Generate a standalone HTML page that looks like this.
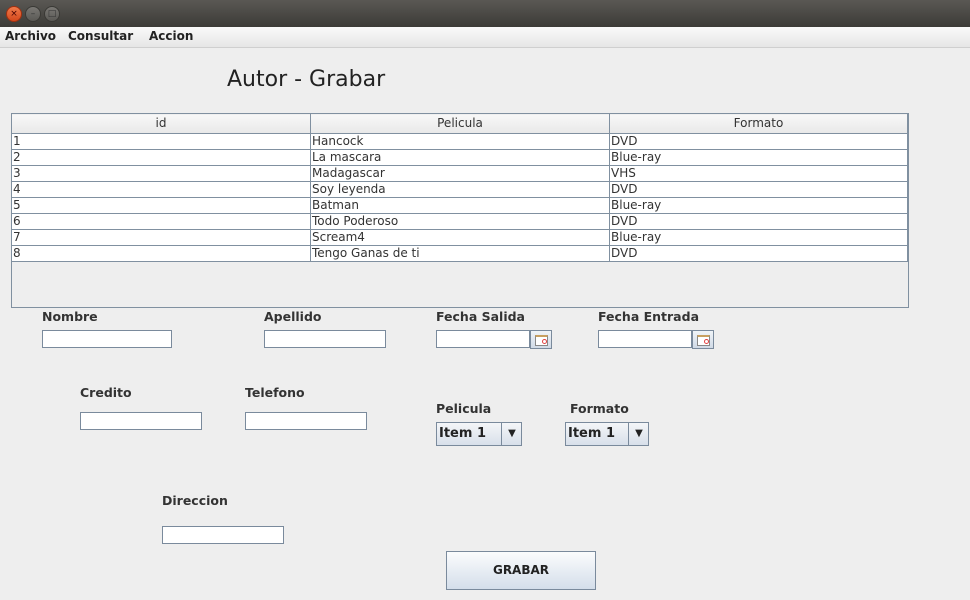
<!DOCTYPE html>
<html><head><style>
body{margin:0;width:970px;height:600px;background:#eeeeee;font-family:"DejaVu Sans","Liberation Sans",sans-serif;position:relative;overflow:hidden}
.a{position:absolute}
.tb{left:0;top:0;width:970px;height:27px;background:linear-gradient(#5a5854,#3c3b37)}
.btn{position:absolute;top:6px;width:14px;height:14px;border-radius:50%;background:linear-gradient(#7a7874,#5a5955);border:1px solid #3a3935;font-size:9px;line-height:14px;text-align:center;color:#333}
.mb{left:0;top:27px;width:970px;height:20px;background:linear-gradient(#fafafa,#e6e6e6);border-bottom:1px solid #cfcfcf;font-size:12px;font-weight:bold;color:#222}
.lbl{font-size:12.5px;font-weight:bold;color:#333}
.tf{background:#fff;border:1px solid #7a8a9c;height:16px;box-sizing:content-box}
table{border-collapse:collapse;font-size:12px;color:#333;table-layout:fixed}
td{border:1px solid #8090a0;height:15px;padding:0 1px;line-height:15px;overflow:hidden;white-space:nowrap}
th{border:1px solid #8090a0;font-weight:normal;height:18px;padding:0;line-height:19px;background:linear-gradient(#f8f8f8,#e8e8e8)}
.cb{height:22px;border:1px solid #7a8a9c;background:linear-gradient(#f4f6f8,#d8e0ea);font-size:13px;font-weight:bold;color:#222;line-height:22px}
.cal{width:20px;height:17px;border:1px solid #7a8a9c;background:linear-gradient(#f0f4f8,#d0dae6)}
.cal i{position:absolute;left:4px;top:4px;width:11px;height:8px;border:1px solid #888;border-top:2px solid #c8a060;background:#fff}
.cal b{position:absolute;left:11px;top:8px;width:3px;height:3px;border:1px solid #e04040;border-radius:50%}
</style></head><body>
<div class="a tb">
<div class="btn" style="left:6px;background:linear-gradient(#f07a4a,#d4481c);border-color:#a03010;color:#400">×</div>
<div class="btn" style="left:25px">–</div><div class="btn" style="left:44px">□</div>
</div>
<div class="a mb"><span class="a" style="left:5px;top:2px">Archivo</span><span class="a" style="left:68px;top:2px">Consultar</span><span class="a" style="left:149px;top:2px">Accion</span></div>
<div class="a" style="left:227px;top:67px;font-size:22px;color:#222">Autor - Grabar</div>
<div class="a" style="left:11px;top:113px;width:896px;height:193px;border:1px solid #8090a0;background:#eeeeee">
<table style="width:897px;margin:-1px 0 0 -1px">
<colgroup><col style="width:299px"><col style="width:299px"><col></colgroup>
<tr><th>id</th><th>Pelicula</th><th>Formato</th></tr>
<tr style="background:#fff"><td>1</td><td>Hancock</td><td>DVD</td></tr>
<tr style="background:#fff"><td>2</td><td>La mascara</td><td>Blue-ray</td></tr>
<tr style="background:#fff"><td>3</td><td>Madagascar</td><td>VHS</td></tr>
<tr style="background:#fff"><td>4</td><td>Soy leyenda</td><td>DVD</td></tr>
<tr style="background:#fff"><td>5</td><td>Batman</td><td>Blue-ray</td></tr>
<tr style="background:#fff"><td>6</td><td>Todo Poderoso</td><td>DVD</td></tr>
<tr style="background:#fff"><td>7</td><td>Scream4</td><td>Blue-ray</td></tr>
<tr style="background:#fff"><td>8</td><td>Tengo Ganas de ti</td><td>DVD</td></tr>
</table></div>
<div class="a lbl" style="left:42px;top:309px">Nombre</div><div class="a tf" style="left:42px;top:330px;width:128px"></div>
<div class="a lbl" style="left:264px;top:309px">Apellido</div><div class="a tf" style="left:264px;top:330px;width:120px"></div>
<div class="a lbl" style="left:436px;top:309px">Fecha Salida</div><div class="a tf" style="left:436px;top:330px;width:92px"></div><div class="a cal" style="left:530px;top:330px"><i></i><b></b></div>
<div class="a lbl" style="left:598px;top:309px">Fecha Entrada</div><div class="a tf" style="left:598px;top:330px;width:92px"></div><div class="a cal" style="left:692px;top:330px"><i></i><b></b></div>
<div class="a lbl" style="left:80px;top:385px">Credito</div><div class="a tf" style="left:80px;top:412px;width:120px"></div>
<div class="a lbl" style="left:245px;top:385px">Telefono</div><div class="a tf" style="left:245px;top:412px;width:120px"></div>
<div class="a lbl" style="left:436px;top:401px">Pelicula</div>
<div class="a cb" style="left:436px;top:422px;width:84px"><span style="padding-left:2px">Item 1</span><span class="a" style="left:64px;top:0;width:20px;height:22px;border-left:1px solid #7a8a9c;text-align:center;font-size:10px">▼</span></div>
<div class="a lbl" style="left:570px;top:401px">Formato</div>
<div class="a cb" style="left:565px;top:422px;width:82px"><span style="padding-left:2px">Item 1</span><span class="a" style="left:62px;top:0;width:20px;height:22px;border-left:1px solid #7a8a9c;text-align:center;font-size:10px">▼</span></div>
<div class="a lbl" style="left:162px;top:493px">Direccion</div><div class="a tf" style="left:162px;top:526px;width:120px"></div>
<div class="a" style="left:446px;top:551px;width:148px;height:37px;border:1px solid #7a8a9c;background:linear-gradient(#fbfcfd,#d4deea);font-size:12px;font-weight:bold;color:#222;text-align:center;line-height:37px">GRABAR</div>
</body></html>
